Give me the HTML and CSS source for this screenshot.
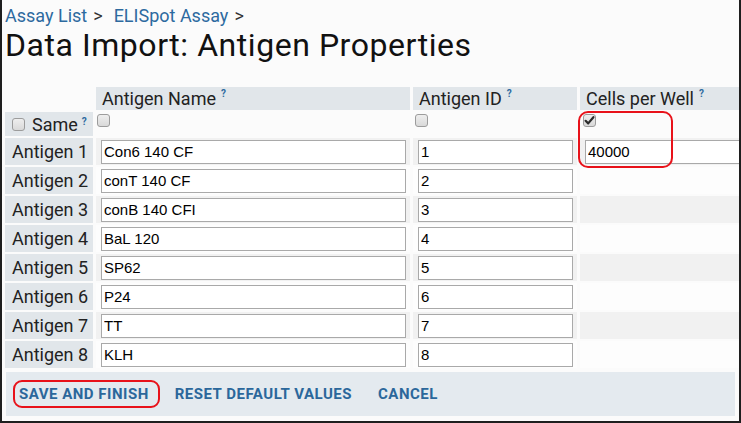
FILE: index.html
```html
<!DOCTYPE html>
<html lang="en">
<head>
<meta charset="utf-8">
<title>Data Import: Antigen Properties</title>
<link rel="stylesheet" href="styles.css">
</head>
<body>
<nav class="crumbs"><a href="#">Assay List</a><span class="sep">&gt;</span><a href="#">ELISpot Assay</a><span class="sep">&gt;</span></nav>
<h1 class="title">Data Import: Antigen Properties</h1>
<table class="grid">
  <colgroup><col class="c-label"><col class="c-name"><col class="c-id"><col class="c-cells"></colgroup>
  <thead>
    <tr><th class="corner"></th><th class="head">Antigen Name<sup>?</sup></th><th class="head">Antigen ID<sup>?</sup></th><th class="head">Cells per Well<sup>?</sup></th></tr>
  </thead>
  <tbody>
    <tr class="same">
      <th class="rowlab"><span class="cb"></span><span class="same-txt">Same</span><sup>?</sup></th>
      <td class="cbcell"><span class="cb"></span></td>
      <td class="cbcell"><span class="cb"></span></td>
      <td class="cbcell"><span class="cb on"><svg viewBox="0 0 13 13" width="13" height="13"><path d="M2.6 6.8 L5.2 9.4 L10.4 3.2" fill="none" stroke="#2b2b2b" stroke-width="2.2" stroke-linecap="round" stroke-linejoin="round"/></svg></span></td>
    </tr>
    <tr class="odd"><th class="rowlab">Antigen 1</th><td><input class="fld" value="Con6 140 CF"></td><td><input class="fld" value="1"></td><td><input class="fld" value="40000"></td></tr>
    <tr class="even"><th class="rowlab">Antigen 2</th><td><input class="fld" value="conT 140 CF"></td><td><input class="fld" value="2"></td><td></td></tr>
    <tr class="odd"><th class="rowlab">Antigen 3</th><td><input class="fld" value="conB 140 CFI"></td><td><input class="fld" value="3"></td><td></td></tr>
    <tr class="even"><th class="rowlab">Antigen 4</th><td><input class="fld" value="BaL 120"></td><td><input class="fld" value="4"></td><td></td></tr>
    <tr class="odd"><th class="rowlab">Antigen 5</th><td><input class="fld" value="SP62"></td><td><input class="fld" value="5"></td><td></td></tr>
    <tr class="even"><th class="rowlab">Antigen 6</th><td><input class="fld" value="P24"></td><td><input class="fld" value="6"></td><td></td></tr>
    <tr class="odd"><th class="rowlab">Antigen 7</th><td><input class="fld" value="TT"></td><td><input class="fld" value="7"></td><td></td></tr>
    <tr class="even"><th class="rowlab">Antigen 8</th><td><input class="fld" value="KLH"></td><td><input class="fld" value="8"></td><td></td></tr>
  </tbody>
</table>
<div class="actions">
  <button class="btn hl">SAVE AND FINISH</button>
  <button class="btn">RESET DEFAULT VALUES</button>
  <button class="btn">CANCEL</button>
</div>
<div class="callout"></div>
</body>
</html>
```
FILE: styles.css
```css
html { background: #fff; }
body {
  margin: 0;
  width: 741px;
  height: 423px;
  box-sizing: border-box;
  border: 2px solid #1e1e1e;
  border-top: 0;
  background: #fbfbfb;
  font-family: Roboto, "Liberation Sans", sans-serif;
  color: #222;
  overflow: hidden;
  position: relative;
}
.crumbs {
  padding: 5px 0 0 3px;
  font-size: 18px;
  line-height: 21px;
  white-space: nowrap;
}
.crumbs a { color: #2d6a9f; text-decoration: none; }
.sep { color: #333; margin: 0 11px 0 6px; }
.title {
  margin: 0 0 0 3px;
  font-size: 32px;
  font-weight: 400;
  line-height: 38px;
  letter-spacing: 0.55px;
  color: #111;
  white-space: nowrap;
}
.grid {
  margin-top: 21px;
  border-collapse: separate;
  border-spacing: 3px 2px;
  table-layout: fixed;
  width: 770px;
}
.c-label { width: 88px; }
.c-name { width: 314px; }
.c-id { width: 164px; }
.c-cells { width: 195px; }
.grid th, .grid td { padding: 0; font-weight: 400; text-align: left; }
.head {
  background: #e1e6ea;
  height: 23px;
  font-size: 18px;
  line-height: 23px;
  padding-left: 6px !important;
  white-space: nowrap;
}
sup {
  font-size: 10px;
  font-weight: 700;
  color: #2d6a9f;
  margin-left: 5px;
  vertical-align: top;
  line-height: 14px;
}
.rowlab {
  background: #e1e6ea;
  font-size: 18px;
  padding-left: 7px !important;
  white-space: nowrap;
}
.same th, .same td { height: 22px; }
.same-txt { margin-left: 7px; }
.same sup { margin-left: 4px; line-height: 16px; }
.cbcell { padding: 2px 0 0 1px !important; vertical-align: top; }
.cb {
  display: inline-block;
  width: 13px;
  height: 13px;
  box-sizing: border-box;
  border: 1px solid #9c9c9c;
  border-radius: 3px;
  background: linear-gradient(#eeeeee, #d9d9d9);
  vertical-align: 0;
  position: relative;
}
.cbcell .cb { display: block; }
.cb svg { position: absolute; left: -1px; top: -1px; }
.grid td:nth-child(3).cbcell { padding-left: 2px !important; }
.grid td:nth-child(4).cbcell { padding-left: 3px !important; }
.odd th, .odd td, .even th, .even td { height: 27px; }
.odd td { background: #f1f1f1; }
.even td { background: #fdfdfd; }
.odd td, .even td { padding: 0 4px 0 5px; vertical-align: middle; }
.fld {
  display: block;
  width: 100%;
  height: 24px;
  box-sizing: border-box;
  border: 1px solid #a9a9a9;
  border-radius: 0;
  padding: 0 2px;
  background: #fff;
  font-family: "Liberation Sans", Arial, sans-serif;
  font-size: 15px;
  color: #000;
}
.grid td:nth-child(4) .fld { width: 200px; }
.actions {
  margin: 2px 4px 0 4px;
  height: 44px;
  background: #e4eaef;
  display: flex;
  align-items: center;
  gap: 9px;
  padding-left: 7px;
}
.btn {
  font-family: Roboto, "Liberation Sans", sans-serif;
  font-size: 15px;
  font-weight: 700;
  letter-spacing: 0.5px;
  color: #2b679b;
  background: none;
  border: 2px solid transparent;
  border-radius: 9px;
  height: 28px;
  padding: 0 9px 0 4px;
  white-space: nowrap;
  cursor: pointer;
}
.btn.hl { border-color: #e8121a; }
.callout {
  position: absolute;
  left: 576px;
  top: 111px;
  width: 95px;
  height: 57px;
  box-sizing: border-box;
  border: 2px solid #e8121a;
  border-radius: 10px;
}
```
